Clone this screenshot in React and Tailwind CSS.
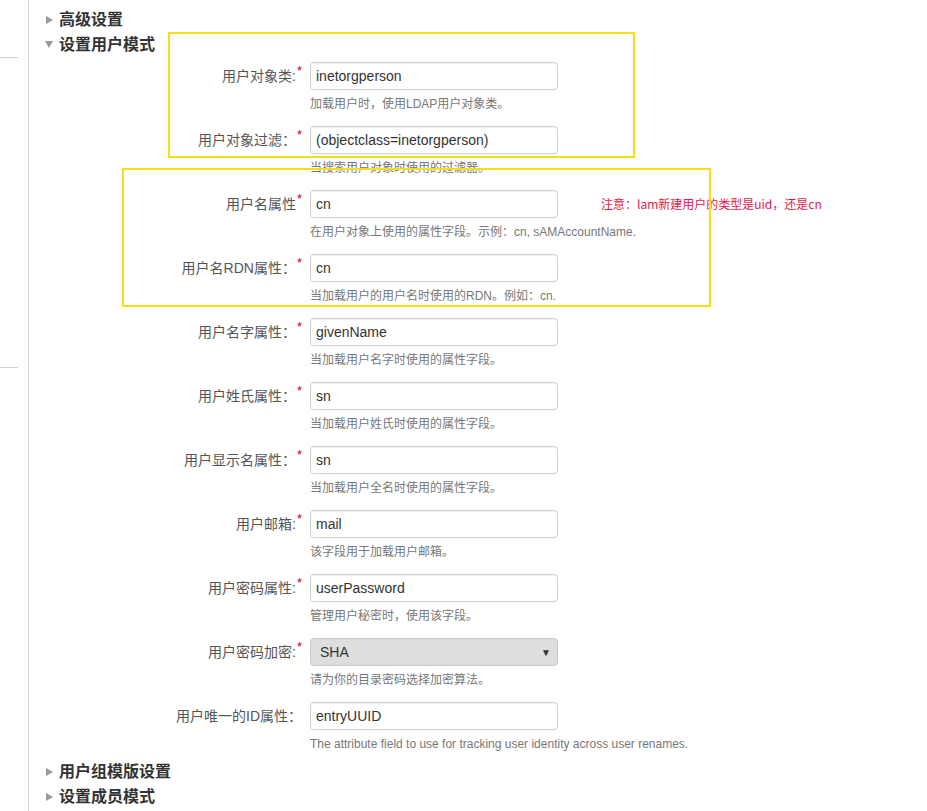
import React from 'react';

const font = "font-['Liberation_Sans','Noto_Sans_CJK_SC',sans-serif]";

const rows = [
  { label: '用户对象类:', req: true, value: 'inetorgperson', help: '加载用户时，使用LDAP用户对象类。' },
  { label: '用户对象过滤：', req: true, value: '(objectclass=inetorgperson)', help: '当搜索用户对象时使用的过滤器。' },
  { label: '用户名属性', req: true, value: 'cn', help: '在用户对象上使用的属性字段。示例：cn, sAMAccountName.' },
  { label: '用户名RDN属性：', req: true, value: 'cn', help: '当加载用户的用户名时使用的RDN。例如：cn.' },
  { label: '用户名字属性：', req: true, value: 'givenName', help: '当加载用户名字时使用的属性字段。' },
  { label: '用户姓氏属性：', req: true, value: 'sn', help: '当加载用户姓氏时使用的属性字段。' },
  { label: '用户显示名属性：', req: true, value: 'sn', help: '当加载用户全名时使用的属性字段。' },
  { label: '用户邮箱:', req: true, value: 'mail', help: '该字段用于加载用户邮箱。' },
  { label: '用户密码属性:', req: true, value: 'userPassword', help: '管理用户秘密时，使用该字段。' },
  { label: '用户密码加密:', req: true, value: 'SHA', help: '请为你的目录密码选择加密算法。', select: true },
  { label: '用户唯一的ID属性：', req: false, value: 'entryUUID', help: 'The attribute field to use for tracking user identity across user renames.' },
];

const Heading = ({ open, children }) => (
  <div className="flex items-center h-[25px] pl-[16px]">
    <div className="w-[14px] flex items-center">
      {open ? (
        <span className="block w-0 h-0 border-x-[4px] border-x-transparent border-t-[7px] border-t-[#999]" />
      ) : (
        <span className="block w-0 h-0 ml-[1px] border-y-[4px] border-y-transparent border-l-[7px] border-l-[#999]" />
      )}
    </div>
    <span className="font-bold text-[16px] text-[#333]">{children}</span>
  </div>
);

const Row = ({ label, req, value, help, select, last }) => (
  <div className={`flex ${last ? '' : 'mb-[14px]'}`}>
    <div className="w-[273px] h-[28px] flex items-center justify-end text-[14px] text-[#555]">
      <span>{label}</span>
      {req && <span className="relative -top-[6px] ml-[1px] text-[13px] text-[#d0021b] leading-none">*</span>}
    </div>
    <div className="ml-[8px] w-[248px]">
      {select ? (
        <div className="h-[28px] flex items-center justify-between pl-[9px] pr-[6px] rounded-[4px] border border-[#c8c8c8] bg-[#dedede] text-[14px] text-[#333]">
          <span>{value}</span>
          <span className="text-[10px] text-[#333]">▼</span>
        </div>
      ) : (
        <div className="h-[28px] flex items-center px-[5px] rounded-[4px] border border-[#cfcfcf] bg-white shadow-[inset_0_1px_1px_rgba(0,0,0,0.06)] text-[14px] text-[#333]">
          {value}
        </div>
      )}
      <div className="mt-[6px] leading-[16px] text-[12px] text-[#777] whitespace-nowrap">{help}</div>
    </div>
  </div>
);

export default function App() {
  return (
    <div className={`relative w-[927px] h-[811px] overflow-hidden bg-white flex ${font}`}>
      <div className="w-[29px] shrink-0 border-r border-[#d4d4d4]">
        <div className="h-[57px]" />
        <div className="h-px w-[18px] bg-[#cfcfcf]" />
        <div className="h-[309px]" />
        <div className="h-px w-[18px] bg-[#cfcfcf]" />
      </div>
      <div className="flex-1 pt-[7px]">
        <Heading>高级设置</Heading>
        <Heading open>设置用户模式</Heading>
        <div className="mt-[5px]">
          {rows.map((r, i) => (
            <Row key={r.label} {...r} last={i === rows.length - 1} />
          ))}
        </div>
        <div className="mt-[7px]">
          <Heading>用户组模版设置</Heading>
          <Heading>设置成员模式</Heading>
        </div>
      </div>

      {/* annotation */}
      <div className="absolute left-[601px] top-[195px] text-[12px] leading-[18px] text-[#e8174a] font-['Noto_Sans_CJK_SC',sans-serif]">
        注意：lam新建用户的类型是uid，还是cn
      </div>
      <div className="absolute left-[168px] top-[32px] w-[467px] h-[126px] border-2 border-[#f7de16]" />
      <div className="absolute left-[122px] top-[168px] w-[589px] h-[139px] border-2 border-[#f7de16]" />
    </div>
  );
}
